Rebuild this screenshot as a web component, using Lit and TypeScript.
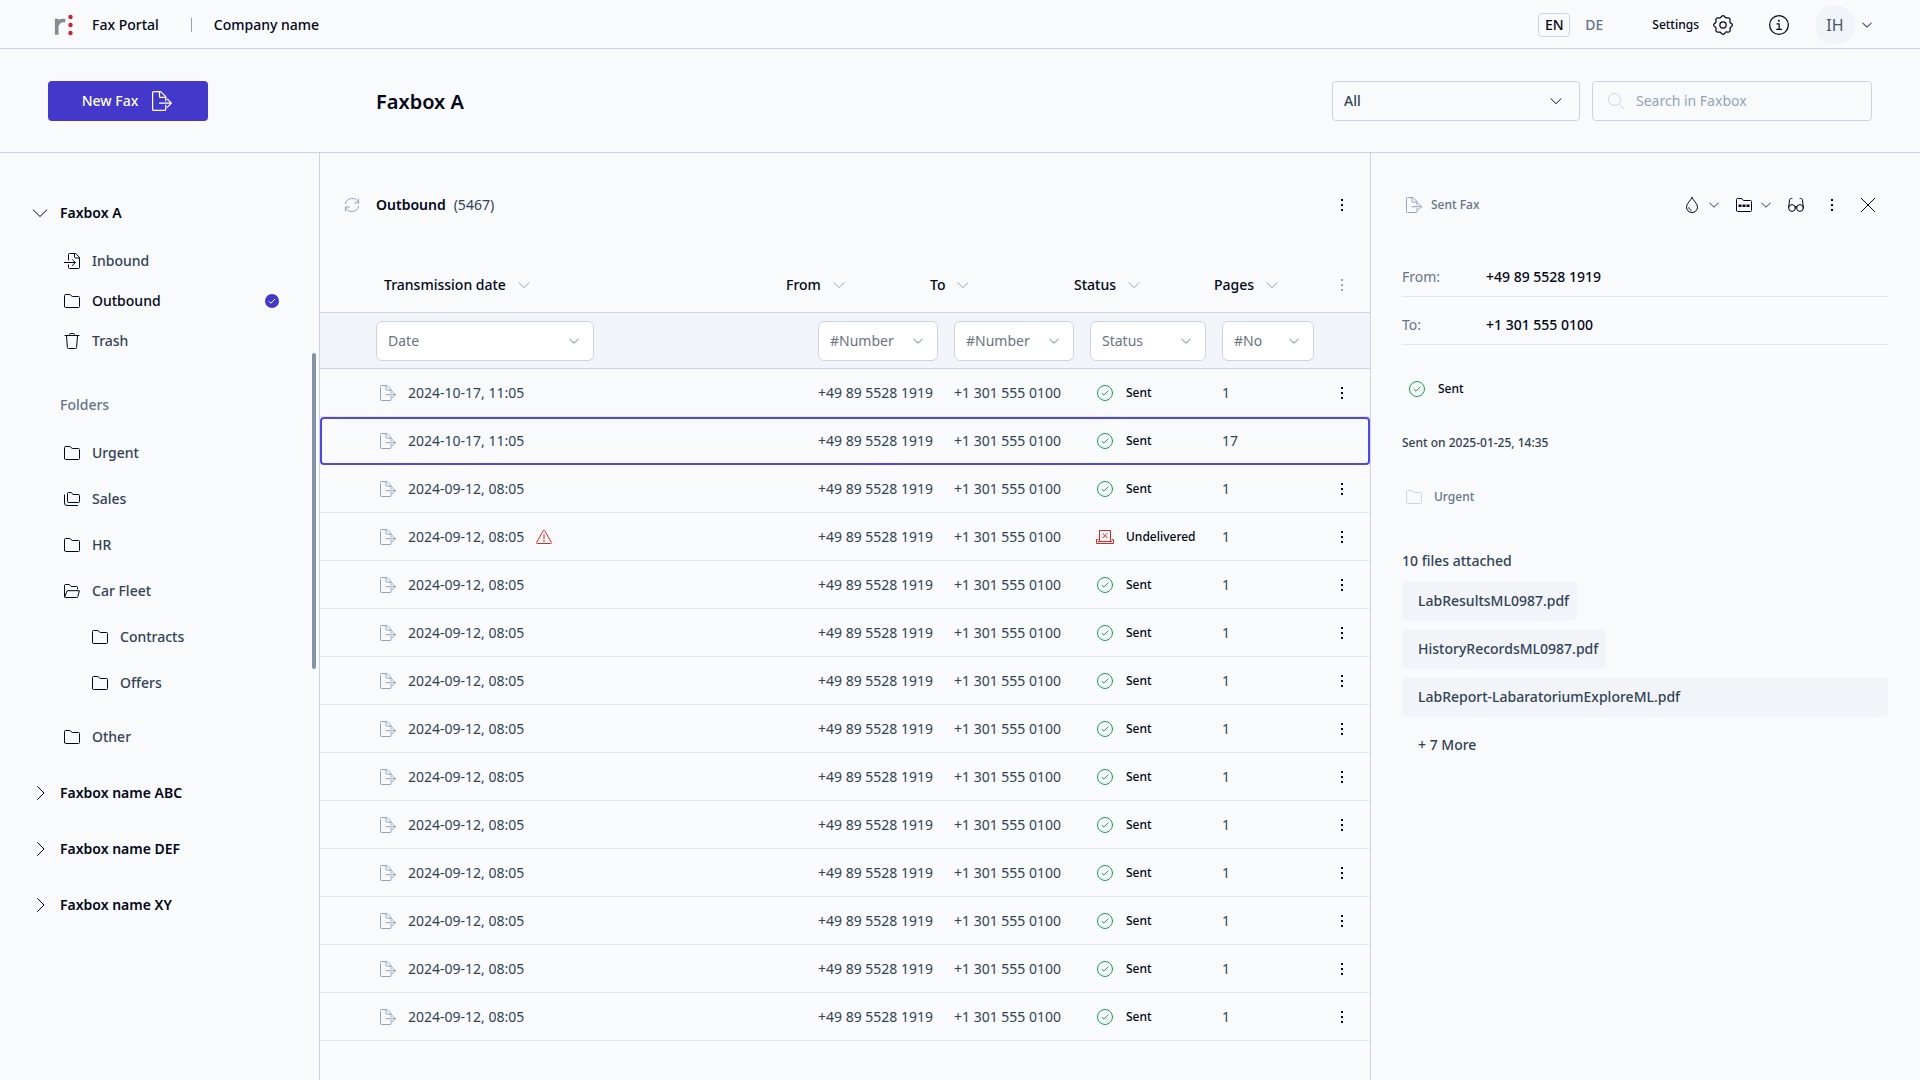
import { LitElement, html, css, svg, nothing, type TemplateResult } from "lit";
import { customElement, state } from "lit/decorators.js";
import { classMap } from "lit/directives/class-map.js";

const drawings: Record<string, TemplateResult> = {
  // Drawn on a 16 x 16 grid
  faxOut: svg`<path d="M11 11.300v3.200a1 1 0 0 1-1 1H1.500a1 1 0 0 1-1-1v-13a1 1 0 0 1 1-1H7L11 4.500v3.300M6 .5v3.800a.8.8 0 0 0 .8.8H11M6 9.700h9.300M12.300 6.500l3.200 3.200-3.200 3.200"/>`,
  faxIn: svg`<path d="M4.500 7V1.500a1 1 0 0 1 1-1h6.200l3.800 3.800v10.200a1 1 0 0 1-1 1h-9a1 1 0 0 1-1-1V12M10.500.7v3.300a1 1 0 0 0 1 1h3.800M.3 9.500h10.900M8.300 6.500l3 3-3 3"/>`,
  folder: svg`<path d="M.5 13.500v-11a1 1 0 0 1 1-1h4.300a1 1 0 0 1 .8.400l.9 1.200a1 1 0 0 0 .8.400h6.200a1 1 0 0 1 1 1v9a1 1 0 0 1-1 1h-13a1 1 0 0 1-1-1z"/>`,
  folders: svg`<path d="M3.500 9.500v-7a1 1 0 0 1 1-1h2.800l1.600 2h5.600a1 1 0 0 1 1 1v6a1 1 0 0 1-1 1h-10a1 1 0 0 1-1-1zM.5 4v8a2.500 2.500 0 0 0 2.500 2.500H13.500"/>`,
  folderOpen: svg`<path d="M.5 13.500v-11a1 1 0 0 1 1-1h3.800l1.800 2H12.500a1 1 0 0 1 1 1V6M.6 13.800 3.200 7.700h12.200l-1.600 5.900a1 1 0 0 1-1 .9H1.200a.6.6 0 0 1-.6-.7z"/>`,
  folderDots: svg`<path d="M.5 13.500v-11a1 1 0 0 1 1-1h4.300l1.700 2h7a1 1 0 0 1 1 1v9a1 1 0 0 1-1 1h-13a1 1 0 0 1-1-1z"/><path class="solid" d="M2.500 7.500h3v2.500h-3zM6.500 7.500h3v2.500h-3zM10.500 7.500h3v2.500h-3z"/>`,
  trash: svg`<path d="M1 2.500h14M5.500 2.300V1.500a1 1 0 0 1 1-1h3a1 1 0 0 1 1 1v.8M2.500 2.700l.9 11.800a1 1 0 0 0 1 1h7.200a1 1 0 0 0 1-1l.9-11.800"/>`,
  refresh: svg`<path d="M1.500 6.500A6.800 6.800 0 0 1 14.300 5.500M14.600 2v4h-4M14.500 9.500A6.800 6.800 0 0 1 1.700 10.500M1.400 14v-4h4"/>`,
  warning: svg`<path d="M7.300 1.600a.8.800 0 0 1 1.400 0l6.700 11.800a.7.700 0 0 1-.6 1.100H1.200a.7.700 0 0 1-.6-1.100zM8 5.500v4.500M8 11.500v1.200"/>`,
  check: svg`<circle cx="8" cy="8" r="7.500"/><path d="m5 8.300 2 1.900 4-4.200"/>`,
  search: svg`<circle cx="6.500" cy="6.500" r="6"/><path d="m10.900 10.900 4.800 4.800"/>`,
  info: svg`<circle cx="8" cy="8" r="7.500"/><path d="M6.400 7h1.700v4.500M6.200 11.500h3.800"/><circle class="solid" cx="7.900" cy="4.600" r=".8"/>`,
  drop: svg`<path d="M8 .6C6.500 3.500 2.500 6.700 2.500 10.200a5.500 5.300 0 0 0 11 0C13.500 6.700 9.500 3.500 8 .6zM4.900 10.600c.1 1.300 1 2.300 2.300 2.600"/>`,
  glasses: svg`<circle cx="4" cy="11" r="3.400"/><circle cx="12" cy="11" r="3.400"/><path d="M7.100 9.700a1.600 1.600 0 0 1 1.800 0M.7 10.500 1.500 3a1.800 1.800 0 0 1 2.500-1.500M15.300 10.500 14.500 3A1.800 1.800 0 0 0 12 1.500"/>`,
  close: svg`<path d="m1.200 1.200 13.600 13.600M14.800 1.200 1.200 14.800"/>`,
  down: svg`<path d="m1.300 5 6.700 6.500L14.700 5"/>`,
  right: svg`<path d="m5.500 1.500 6.500 6.500-6.500 6.500"/>`,
  dots: svg`<path class="solid" d="M7 2h2v2H7zM7 7h2v2H7zM7 12h2v2H7z"/>`,
  machine: svg`<path d="M2.500 12V1.500h11V12M.8 10.500H-.5v4h17v-4h-1.300M1.500 12.500h13M5.800 4.500l4.400 4.400M10.200 4.500 5.800 8.900"/>`,
  gear: svg`<circle cx="8" cy="8" r="2.500"/><path d="M8 .5C9.300.5 9.400 1.900 10.300 2.300S12.300 1.700 13.300 2.700 13.200 4.800 13.600 5.700 15.500 6.700 15.500 8 14.100 9.400 13.700 10.300 14.300 12.300 13.300 13.300 11.200 13.200 10.300 13.600 9.300 15.500 8 15.500 6.600 14.100 5.700 13.700 3.700 14.300 2.700 13.300 2.800 11.200 2.400 10.300.500 9.300.500 8 1.900 6.600 2.300 5.700 1.700 3.700 2.700 2.700 4.800 2.800 5.700 2.400 6.700.500 8 .5z"/>`,
};

const icon = (name: string, size = "s16", tone = "") =>
  html`<svg class="icon ${size} ${tone}" viewBox="0 0 16 16" aria-hidden="true">${drawings[name]}</svg>`;

const shared = css`
  :host {
    font-family: "Noto Sans", "Open Sans", sans-serif;
    font-size: 14px;
    line-height: 20px;
    color: #334155;
  }
  * { box-sizing: border-box; }
  button, input, select { font: inherit; color: inherit; }
  button { background: none; border: 0; padding: 0; cursor: pointer; display: flex; align-items: center; }
  a { color: inherit; text-decoration: none; }
  .icon { display: block; flex: none; fill: none; stroke: currentColor; stroke-width: 1; stroke-linecap: round; stroke-linejoin: round; overflow: visible; }
  .icon .solid { fill: currentColor; stroke: none; }
  .s10 { width: 10px; height: 10px; stroke-width: 1.8; }
  .s12 { width: 12px; height: 12px; stroke-width: 1.3; }
  .s16 { width: 16px; height: 16px; }
  .s20 { width: 20px; height: 20px; }
  .ink { color: #020617; }
  .soft { color: #94a3b8; }
  .mid { color: #64748b; }
  .pale { color: #cbd5e1; }
  .green { color: #16a34a; }
  .red { color: #dc2626; }
`;

@customElement("portal-header")
export class PortalHeader extends LitElement {
  static styles = [shared, css`
    :host { display: block; }
    .bar { display: flex; align-items: center; justify-content: space-between; height: 49px; padding: 2px 48px 0 54px; border-bottom: 1px solid #cbd5e1; color: #020617; font-weight: 500; }
    .group { display: flex; align-items: center; }
    .logo { width: 20px; height: 22px; margin-right: 18px; }
    .divider { width: 1px; height: 14px; margin: 0 22px 0 32px; background: #94a3b8; }
    .languages { display: flex; align-items: center; gap: 8px; margin-right: 42px; }
    .lang { justify-content: center; width: 32px; height: 24px; border: 1px solid transparent; border-radius: 4px; color: #64748b; }
    .lang.active { border-color: #cbd5e1; color: #020617; }
    .settings { gap: 14px; font-size: 12px; }
    .info { margin: 0 26px 0 36px; }
    .account { gap: 7px; color: #475569; font-size: 16px; font-weight: 400; }
    .avatar { display: grid; place-items: center; width: 40px; height: 40px; border-radius: 50%; background: #f1f5f9; }
  `];

  @state() private language = "EN";

  render() {
    return html`<header class="bar">
      <div class="group">
        <svg class="logo" viewBox="0 0 20 22" aria-hidden="true">
          <path d="M2.700 20.700V4.700M3.500 11C4.200 7.200 7 5.800 11.300 6.700" fill="none" stroke="#8a8a8a" stroke-width="3.600"/>
          <g fill="#cf2031"><circle cx="16.500" cy="3" r="2.200"/><circle cx="16.500" cy="11" r="2.200"/><circle cx="16.500" cy="19" r="2.200"/></g>
        </svg>
        <span>Fax Portal</span>
        <span class="divider"></span>
        <span>Company name</span>
      </div>
      <div class="group">
        <div class="languages">
          ${["EN", "DE"].map((l) => html`<button class=${classMap({ lang: true, active: l === this.language })} @click=${() => (this.language = l)}>${l}</button>`)}
        </div>
        <button class="settings">Settings ${icon("gear", "s20")}</button>
        <button class="info" aria-label="Information">${icon("info", "s20")}</button>
        <button class="account" aria-label="Account IH"><span class="avatar">IH</span>${icon("down", "s10")}</button>
      </div>
    </header>`;
  }
}

interface Entry { label: string; icon: string; nested?: boolean }

@customElement("fax-sidebar")
export class FaxSidebar extends LitElement {
  static styles = [shared, css`
    :host { display: flex; padding: 40px 3px 0 32px; border-right: 1px solid #cbd5e1; }
    nav { flex: 1; }
    ul { list-style: none; margin: 0; padding: 0; }
    .box { display: flex; align-items: center; gap: 12px; width: 100%; height: 40px; font-weight: 600; color: #020617; }
    .closed { height: 56px; }
    .entry { display: flex; align-items: center; gap: 12px; height: 40px; padding: 0 33px 0 32px; font-weight: 500; }
    .main { padding: 8px 0 24px; }
    .current { color: #020617; }
    .current span { flex: 1; }
    .title { margin: 0; height: 40px; padding-left: 28px; font-size: 14px; line-height: 40px; font-weight: 500; color: #64748b; }
    .tree { padding: 5px 0; }
    .tree .entry { height: 46px; }
    .tree .nested { padding-left: 60px; }
    .tree .last { margin-top: 8px; }
    .badge { display: grid; place-items: center; width: 14px; height: 14px; border-radius: 50%; background: #4338ca; }
    .badge svg { width: 8px; height: 8px; fill: none; stroke: #ffffff; }
    .thumb { width: 4px; height: 316px; margin-top: 160px; border-radius: 2px; background: #8492a6; }
  `];

  private boxes: Entry[] = [
    { label: "Inbound", icon: "faxIn" },
    { label: "Outbound", icon: "folder" },
    { label: "Trash", icon: "trash" },
  ];
  private folders: Entry[] = [
    { label: "Urgent", icon: "folder" },
    { label: "Sales", icon: "folders" },
    { label: "HR", icon: "folder" },
    { label: "Car Fleet", icon: "folderOpen" },
    { label: "Contracts", icon: "folder", nested: true },
    { label: "Offers", icon: "folder", nested: true },
    { label: "Other", icon: "folder" },
  ];

  render() {
    return html`<nav aria-label="Faxboxes">
      <button class="box" aria-expanded="true">${icon("down", "s16")}Faxbox A</button>
      <ul class="main">
        ${this.boxes.map((b) => html`<li><a href="#" class=${classMap({ entry: true, current: b.label === "Outbound" })}>
          ${icon(b.icon, "s16", "ink")}<span>${b.label}</span>
          ${b.label === "Outbound" ? html`<i class="badge"><svg viewBox="0 0 8 8" aria-hidden="true"><path d="m1 4.300 1.900 1.900L7 2"/></svg></i>` : nothing}
        </a></li>`)}
      </ul>
      <h2 class="title">Folders</h2>
      <ul class="tree">
        ${this.folders.map((f, i) => html`<li><a href="#" class=${classMap({ entry: true, nested: !!f.nested, last: i === this.folders.length - 1 })}>
          ${icon(f.icon, "s16", "ink")}<span>${f.label}</span></a></li>`)}
      </ul>
      ${["ABC", "DEF", "XY"].map((n) => html`<button class="box closed" aria-expanded="false">${icon("right", "s16")}Faxbox name ${n}</button>`)}
    </nav>
    <div class="thumb"></div>`;
  }
}

interface Fax { date: string; from: string; to: string; status: string; pages: number; warn?: boolean }

@customElement("fax-table")
export class FaxTable extends LitElement {
  static styles = [shared, css`
    :host { display: block; min-width: 0; }
    .heading { display: flex; align-items: center; gap: 8px; height: 104px; padding: 0 20px 0 24px; }
    .heading h2 { margin: 0 0 0 8px; font-size: 14px; line-height: 20px; font-weight: 600; color: #020617; }
    .count { flex: 1; }
    table, thead, tbody { display: block; }
    tr { display: grid; align-items: center; grid-template-columns: minmax(0, 1fr) 136px 136px 132px 92px 56px; }
    th, td { padding: 0; text-align: left; font-weight: 400; }
    .labels { height: 56px; grid-template-columns: minmax(0, 1fr) 144px 144px 140px 100px 56px; padding-left: 64px; border-bottom: 1px solid #cbd5e1; }
    .sort { gap: 12px; font-weight: 500; color: #020617; }
    .filters { height: 56px; padding-left: 56px; background: #f1f5f9; border-bottom: 1px solid #cbd5e1; }
    .filter { display: grid; align-items: center; margin-right: 16px; color: #6b7280; }
    .filter > * { grid-area: 1 / 1; }
    .filter .icon { justify-self: end; margin-right: 15px; pointer-events: none; }
    .filter.date { width: 218px; }
    .filter.pages { margin-right: 0; }
    select { appearance: none; width: 100%; height: 40px; padding: 0 11px; border: 1px solid #cbd5e1; border-radius: 6px; background: #ffffff; }
    .row { height: 48px; padding-left: 60px; border-bottom: 1px solid #e2e8f0; }
    .row.selected { border: 2px solid #4f46e5; border-radius: 4px; padding-left: 58px; grid-template-columns: minmax(0, 1fr) 136px 136px 132px 92px 54px; }
    .cell { display: flex; align-items: center; gap: 12px; }
    .state { gap: 13px; padding-left: 7px; font-size: 12px; font-weight: 500; color: #020617; }
    .more { justify-content: center; width: 100%; }
    .heading .more { width: 16px; }
  `];

  private faxes: Fax[] = Array.from({ length: 14 }, (_, i) => ({
    date: i < 2 ? "2024-10-17, 11:05" : "2024-09-12, 08:05",
    from: "+49 89 5528 1919",
    to: "+1 301 555 0100",
    status: i === 3 ? "Undelivered" : "Sent",
    pages: i === 1 ? 17 : 1,
    warn: i === 3,
  }));
  @state() private selected = 1;

  private filter(label: string, kind = "", name = label) {
    return html`<th><label class="filter ${kind}">
      <select aria-label=${name}><option>${label}</option></select>${icon("down", "s10", "soft")}</label></th>`;
  }

  private row(fax: Fax, i: number) {
    const selected = i === this.selected;
    return html`<tr class=${classMap({ row: true, selected })} @click=${() => (this.selected = i)}>
      <td class="cell">${icon("faxOut", "s16", "soft")}${fax.date}${fax.warn ? icon("warning", "s16", "red") : nothing}</td>
      <td>${fax.from}</td>
      <td>${fax.to}</td>
      <td class="cell state">${fax.warn ? icon("machine", "s16", "red") : icon("check", "s16", "green")}${fax.status}</td>
      <td>${fax.pages}</td>
      <td>${selected ? nothing : html`<button class="more" aria-label="Row actions">${icon("dots", "s16", "ink")}</button>`}</td>
    </tr>`;
  }

  render() {
    return html`
      <div class="heading">
        <button aria-label="Refresh">${icon("refresh", "s16", "soft")}</button>
        <h2>Outbound</h2><span class="count">(5467)</span>
        <button class="more" aria-label="List actions">${icon("dots", "s16", "ink")}</button>
      </div>
      <table>
        <thead>
          <tr class="labels">
            ${["Transmission date", "From", "To", "Status", "Pages"].map((l) => html`<th><button class="sort">${l}${icon("down", "s12", "soft")}</button></th>`)}
            <th><button class="more" aria-label="Columns">${icon("dots", "s16", "soft")}</button></th>
          </tr>
          <tr class="filters">
            ${this.filter("Date", "date")}${this.filter("#Number", "", "From")}${this.filter("#Number", "", "To")}${this.filter("Status")}${this.filter("#No", "pages", "Pages")}<th></th>
          </tr>
        </thead>
        <tbody>${this.faxes.map((f, i) => this.row(f, i))}</tbody>
      </table>`;
  }
}

@customElement("fax-details")
export class FaxDetails extends LitElement {
  static styles = [shared, css`
    :host { display: block; padding: 32px 32px 32px 31px; border-left: 1px solid #cbd5e1; }
    .tools { display: flex; align-items: center; height: 40px; padding: 0 12px 0 4px; margin-bottom: 24px; color: #020617; }
    .kind { flex: 1; display: flex; align-items: center; gap: 9px; font-size: 12px; font-weight: 500; color: #64748b; }
    .actions { display: flex; align-items: center; gap: 17px; }
    .split { gap: 9px; }
    .actions .more { margin: 0 3px; }
    dl { margin: 0; }
    .pair { display: flex; height: 48px; align-items: center; padding-top: 9px; border-bottom: 1px solid #dbe7f1; }
    dt { width: 84px; color: #64748b; }
    dd { margin: 0; font-weight: 500; color: #020617; }
    .line { display: flex; align-items: center; gap: 12px; margin: 0; height: 88px; font-size: 12px; font-weight: 500; }
    .status { gap: 13px; padding-left: 7px; color: #020617; }
    .date { height: 20px; }
    .place { padding-left: 4px; color: #64748b; }
    .files { margin: 10px 0; font-size: 14px; line-height: 20px; font-weight: 500; }
    .list { list-style: none; margin: 0; padding: 0; display: flex; flex-direction: column; align-items: flex-start; gap: 8px; }
    .file { display: block; padding: 10px 8px 10px 16px; border-radius: 4px; background: #f1f5f9; font-weight: 500; }
    .list li:last-child { align-self: stretch; }
    .rest { height: 40px; margin-top: 8px; padding: 0 16px; font-weight: 500; }
  `];

  render() {
    return html`
      <div class="tools">
        <span class="kind">${icon("faxOut", "s16", "soft")}Sent Fax</span>
        <div class="actions">
          <button class="split" aria-label="Tag">${icon("drop")}${icon("down", "s10", "mid")}</button>
          <button class="split" aria-label="Move to folder">${icon("folderDots")}${icon("down", "s10", "mid")}</button>
          <button aria-label="Preview">${icon("glasses")}</button>
          <button class="more" aria-label="More">${icon("dots")}</button>
          <button aria-label="Close">${icon("close")}</button>
        </div>
      </div>
      <dl>
        <div class="pair"><dt>From:</dt><dd>+49 89 5528 1919</dd></div>
        <div class="pair"><dt>To:</dt><dd>+1 301 555 0100</dd></div>
      </dl>
      <p class="line status">${icon("check", "s16", "green")}Sent</p>
      <p class="line date">Sent on 2025-01-25, 14:35</p>
      <p class="line place">${icon("folder", "s16", "pale")}Urgent</p>
      <h3 class="files">10 files attached</h3>
      <ul class="list">
        ${["LabResultsML0987.pdf", "HistoryRecordsML0987.pdf", "LabReport-LabaratoriumExploreML.pdf"].map((f) => html`<li><a class="file" href="#">${f}</a></li>`)}
      </ul>
      <button class="rest">+ 7 More</button>`;
  }
}

@customElement("app-root")
export class AppRoot extends LitElement {
  static styles = [shared, css`
    :host { display: flex; flex-direction: column; min-height: 100vh; background: #f8fafc; }
    .top { display: flex; align-items: center; height: 104px; padding: 0 48px; border-bottom: 1px solid #cbd5e1; }
    .compose { justify-content: center; gap: 14px; width: 160px; height: 40px; padding-right: 2px; border-radius: 4px; background: #4338ca; color: #ffffff; font-weight: 500; }
    h1 { flex: 1; margin: 0 0 0 168px; padding-top: 2px; font-size: 20px; line-height: 28px; font-weight: 600; color: #020617; }
    .field { display: grid; align-items: center; width: 248px; }
    .field > * { grid-area: 1 / 1; }
    .field select, .field input { appearance: none; width: 100%; height: 40px; margin: 0; border: 1px solid #cbd5e1; border-radius: 4px; background: transparent; outline: none; }
    .field select { padding: 0 11px; font-weight: 500; }
    .field select + .icon { justify-self: end; margin-right: 18px; pointer-events: none; }
    .search { width: 280px; margin-left: 12px; }
    .search .icon { margin-left: 16px; }
    .search input { padding: 0 12px 0 43px; }
    .search input::placeholder { color: #94a3b8; opacity: 1; }
    main { flex: 1; display: grid; grid-template-columns: 320px minmax(0, 1fr) 550px; }
  `];

  render() {
    return html`
      <portal-header></portal-header>
      <div class="top">
        <button class="compose">New Fax ${icon("faxOut", "s20")}</button>
        <h1>Faxbox A</h1>
        <label class="field"><select aria-label="Scope"><option>All</option></select>${icon("down", "s12", "ink")}</label>
        <label class="field search"><input type="search" aria-label="Search in Faxbox" placeholder="Search in Faxbox" />${icon("search", "s16", "pale")}</label>
      </div>
      <main>
        <fax-sidebar></fax-sidebar>
        <fax-table></fax-table>
        <fax-details></fax-details>
      </main>`;
  }
}
